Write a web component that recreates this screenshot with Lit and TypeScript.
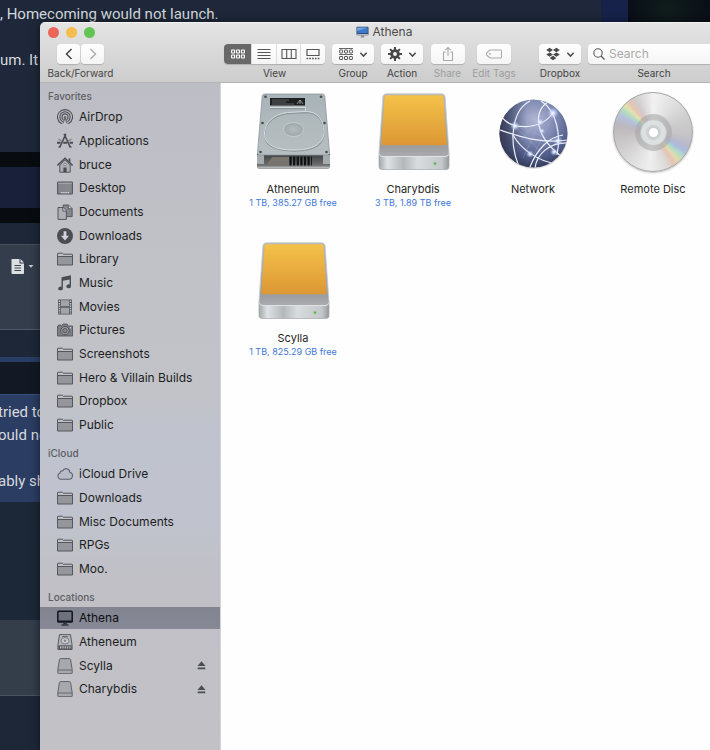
import { LitElement, html, svg, css, nothing, type TemplateResult } from "lit";
import { customElement, property } from "lit/decorators.js";
import { classMap } from "lit/directives/class-map.js";

/* ---------- sidebar glyphs (16 x 16) ---------- */

const folder = svg`
  <path d="M.5 14V2.200h5l1 1h9V14z" fill="#94969c"/>
  <path d="M.5 5V2.200h5l1 1h9V5z" fill="#bdbfc4"/>
  <path d="M.5 14V2.700c0-.3.200-.5.500-.5h4.300c.5 0 .6 1 1.100 1H15c.3 0 .5.2.5.5V14zM.5 5.500h15" fill="none" stroke="#55575d"/>`;

const externalDisk = svg`
  <path d="M3.400 .6h9.200c.5 0 .8.3.9.8l1.700 10.100v3.400c0 .5-.3.800-.8.800H1.600c-.5 0-.8-.3-.8-.8v-3.400L2.500 1.400c.1-.5.4-.8.9-.8z" fill="#a6a8ad" stroke="#606268"/>
  <path d="M1 12h14" stroke="#606268" stroke-width=".9"/>`;

const glyphs: Record<string, unknown> = {
  folder,
  external: externalDisk,
  airdrop: svg`
    <g fill="none" stroke="#4b4d52" stroke-width="1.100" stroke-linecap="round">
      <path d="M4.300 14.600a7.500 7.500 0 1 1 7.400 0"/>
      <path d="M5.200 12.400a5.200 5.200 0 1 1 5.600 0"/>
      <path d="M6 10.300a3.100 3.100 0 1 1 4 0"/>
    </g>
    <path d="M8 7a1.300 1.300 0 0 1 1 2.200l1.600 5.300H5.400L7 9.200A1.300 1.300 0 0 1 8 7z" fill="#65676c"/>
    <path d="M8 10.500l1.800 4.500H6.200z" fill="#c0c1c6"/>`,
  apps: svg`
    <path d="M8.900.9L2.600 14.600M7.100.9l6.300 13.700" stroke="#4b4d52" stroke-width="1.500" fill="none"/>
    <path d="M0 9.700h3.600M6.200 9.700h3.900M12.500 9.700H16" stroke="#4b4d52" stroke-width="2"/>
    <path d="M1.300 6.300l3.200 1.400M14.600 6.300l-4 1.800" stroke="#6b6d72" stroke-width="1"/>
    <path d="M2 12.500l-.7 2.500 2-1.600M14 12.500l.7 2.500-2-1.600" fill="#4b4d52"/>`,
  home: svg`
    <path d="M2.800 8v7.200h10.400V8L8 2.800z" fill="#aeb0b5" stroke="#55575d"/>
    <path d="M.4 8.400L8 1.200l7.600 7.200" fill="none" stroke="#4b4d52" stroke-width="1.400"/>
    <path d="M11.600 1.600h1.800v3.800l-1.800-1.700z" fill="#4b4d52"/>
    <path d="M6.400 10.500h3.200v4.700H6.400z" fill="#4b4d52"/>
    <circle cx="8" cy="7.500" r="1.300" fill="#c8c9cd" stroke="#6b6d72" stroke-width=".6"/>`,
  desktop: svg`
    <rect x=".6" y="2" width="14.800" height="12" rx=".6" fill="#85878d" stroke="#55575d" stroke-width="1.100"/>
    <path d="M1.200 3.300h13.600" stroke="#a9abb0" stroke-width="1"/>
    <path d="M4 12.600h8" stroke="#d5d6da" stroke-width="1.300" stroke-dasharray="1.500 .7"/>`,
  documents: svg`
    <path d="M6.200 1h5.300l3.600 3.600v8H6.200z" fill="#85878d" stroke="#55575d"/>
    <path d="M11.300 1v3.800h3.800" fill="#c0c1c6" stroke="#55575d" stroke-width=".9"/>
    <path d="M1 3.500h5l3.400 3.400v8.500H1z" fill="#aeb0b5" stroke="#55575d"/>
    <path d="M5.800 3.500v3.600h3.600" fill="#c0c1c6" stroke="#55575d" stroke-width=".9"/>`,
  download: svg`
    <circle cx="8" cy="8" r="8" fill="#4b4d52"/>
    <path d="M6.600 3.200h2.800v4.600H12l-4 4.700-4-4.700h2.600z" fill="#d3d4d8"/>`,
  music: svg`
    <path d="M4.500 2.200L14 .3v10.900a2.300 1.900 0 1 1-1.400-1.700V4.400L5.900 5.700v7.700a2.300 1.900 0 1 1-1.400-1.700z" fill="#4b4d52"/>`,
  movies: svg`
    <rect x="1" y=".5" width="14" height="15" fill="#55575d"/>
    <path d="M4 1.300h8v6H4zM4 8.700h8v6H4z" fill="#a2a4aa"/>
    <path d="M2.500 1.500v13M13.500 1.500v13" stroke="#c0c1c6" stroke-width="1.500" stroke-dasharray="1.500 .9"/>`,
  camera: svg`
    <path d="M.5 4h1V3h2.200v1h1.200l1-2h4.200l1 2h4.400v10H.5z" fill="#7d7f85" stroke="#55575d" stroke-width=".9"/>
    <circle cx="8" cy="8.700" r="4.200" fill="#9b9da3" stroke="#505257"/>
    <circle cx="8" cy="8.700" r="2.200" fill="#85878d" stroke="#505257" stroke-width=".9"/>
    <circle cx="13.500" cy="5.800" r=".7" fill="#d0d1d5"/>`,
  cloud: svg`
    <path d="M4 13.200a3.200 3.200 0 0 1-1-6.200c0-1.500 1.400-2.500 2.700-2.100a3.700 3.700 0 0 1 7.100 1.400 3.500 3.500 0 0 1-.4 6.900z" fill="#b9bcc6" stroke="#606268" stroke-width="1.100"/>`,
  computer: svg`
    <rect x=".8" y="1.200" width="14.400" height="10.800" rx=".8" fill="#6d7280" stroke="#14161c" stroke-width="1.500"/>
    <path d="M.5 11.200h15" stroke="#14161c" stroke-width="1.400"/>
    <path d="M6.400 12.500h3.200l.3 1.700H6.100z" fill="#30333c"/>
    <path d="M4.500 15h7" stroke="#14161c" stroke-width="1.100"/>`,
  internal: svg`
    <path d="M2.500.6h11l1.600 10.700v4.200H.9v-4.200z" fill="#b3b5ba" stroke="#5b5d63"/>
    <path d="M1.300 11.300h13.400v3.900H1.300z" fill="#55575d"/>
    <path d="M3 13.400h10.500" stroke="#b3b5ba" stroke-width="2.400" stroke-dasharray="1.400 .9"/>
    <ellipse cx="8" cy="6.800" rx="4" ry="3.200" fill="#c8c9cd" stroke="#6b6d72" stroke-width=".8"/>
    <circle cx="8" cy="6.800" r="1.200" fill="#85878d"/>
    <path d="M5 2.500h6" stroke="#6b6d72"/>`,
};

/* ---------- large volume pictures (80 x 80) ---------- */

const hardDisk = html`<svg class="art" viewBox="0 0 80 80" aria-hidden="true">
  <defs>
    <linearGradient id="hd-top" x1="0" y1="0" x2="0" y2="1"><stop offset="0" stop-color="#a9b4b8"/><stop offset="1" stop-color="#b7bec1"/></linearGradient>
    <linearGradient id="hd-base" x1="0" y1="0" x2="0" y2="1"><stop offset="0" stop-color="#3d3f40"/><stop offset=".7" stop-color="#6a6b6b"/><stop offset="1" stop-color="#a3a6a8"/></linearGradient>
    <radialGradient id="hd-hub"><stop offset="0" stop-color="#b4bcbf"/><stop offset="1" stop-color="#9ea7aa"/></radialGradient>
  </defs>
  <path d="M4 62h73v12.500c0 1.500-1 2.500-2.500 2.500h-68C5 77 4 76 4 74.500z" fill="url(#hd-base)"/>
  <path d="M4 63h7v9H4zM70 63h7v9h-7z" fill="#a5abae"/>
  <path d="M19 65h17v9H13z" fill="#77736d"/>
  <path d="M36.500 69h22.500" stroke="#101112" stroke-width="9" stroke-dasharray="2.200 1.400"/>
  <path d="M4.500 75.500h72" stroke="#b3b7b9" stroke-width="1.500"/>
  <path d="M12 2h57c1.600 0 2.600.8 2.800 2.400L76.500 61c0 1.300-.6 2-2 2h-68c-1.400 0-2-.7-2-2L9.200 4.400C9.400 2.800 10.400 2 12 2z" fill="url(#hd-top)" stroke="#8c9699" stroke-width=".8"/>
  <path d="M17 15.500h35.500v4c13 0 18 9 18.500 20 0 13-12 18.500-30 18.500S11 53 11.500 41c.5-10 8-18.500 23-20.500l18-1" fill="none" stroke="#8d979a" stroke-width="1.300" transform="translate(0 1)"/>
  <path d="M17 15.500h35.500v4c13 0 18 9 18.500 20 0 13-12 18.500-30 18.500S11 53 11.500 41c.5-10 8-18.500 23-20.500l18-1" fill="none" stroke="#d6dddf"/>
  <ellipse cx="40.500" cy="37.500" rx="10" ry="7" fill="url(#hd-hub)" stroke="#cbd2d4" stroke-width=".8"/>
  <path d="M17 6h35v7.500H17z" fill="#1e2021"/>
  <path d="M19 8h17M19 10h14M19 12h22" stroke="#6d7072" stroke-width=".8"/>
  <path d="M44 12l3-4 3 4M47 8v4" fill="none" stroke="#b3b6b8" stroke-width=".8"/>
  <g fill="#454c4f"><circle cx="12.500" cy="4.700" r="1.300"/><circle cx="68" cy="4.700" r="1.300"/><circle cx="9.500" cy="31" r="1.300"/><circle cx="71.500" cy="31" r="1.300"/><circle cx="7.500" cy="60" r="1.300"/><circle cx="73.500" cy="60" r="1.300"/></g>
</svg>`;

const yellowDisk = html`<svg class="art" viewBox="0 0 80 80" aria-hidden="true">
  <defs>
    <linearGradient id="yd-label" x1="0" y1="0" x2="0" y2="1"><stop offset="0" stop-color="#f4c249"/><stop offset="1" stop-color="#dc9734"/></linearGradient>
    <linearGradient id="yd-lid" x1="0" y1="0" x2="0" y2="1"><stop offset="0" stop-color="#b4b6b8"/><stop offset=".85" stop-color="#9c9ea1"/><stop offset="1" stop-color="#aaacae"/></linearGradient>
    <linearGradient id="yd-front" x1="0" y1="0" x2="1" y2="0"><stop offset="0" stop-color="#a3a7aa"/><stop offset=".12" stop-color="#dfe2e4"/><stop offset=".35" stop-color="#b4b8bb"/><stop offset=".55" stop-color="#d9dcde"/><stop offset=".9" stop-color="#c4c7c9"/><stop offset="1" stop-color="#94989b"/></linearGradient>
  </defs>
  <path d="M6 61h70v13.500c0 2-1 3-3 3H9c-2 0-3-1-3-3z" fill="url(#yd-front)" stroke="#a3a6a9" stroke-width=".7"/>
  <path d="M13.500 1.800h55c2 0 3.300 1 3.600 3L76 60c0 3-1 4.500-4 4.500H10c-3 0-4-1.500-4-4.500L9.900 4.800c.3-2 1.600-3 3.600-3z" fill="url(#yd-lid)" stroke="#c9cbcc" stroke-width=".8"/>
  <path d="M6.500 62.500c.7 1.500 2 2 3.500 2h62c1.500 0 2.800-.5 3.500-2" fill="none" stroke="#dfe1e2"/>
  <path d="M13.500 3.200h55c1.200 0 1.800.6 1.900 1.700L73.700 51c0 1.500-.7 2.200-2 2.200H10.300c-1.300 0-2-.7-2-2.200l3.300-46.100c.1-1.100.7-1.700 1.900-1.700z" fill="url(#yd-label)"/>
  <circle cx="62" cy="71.500" r="1.900" fill="#a6c9a0"/><circle cx="62" cy="71.500" r="1" fill="#46b23e"/>
</svg>`;

const globe = html`<svg class="art" viewBox="0 0 80 80" aria-hidden="true">
  <defs>
    <radialGradient id="gl-ball" cx=".52" cy=".3" r=".72"><stop offset="0" stop-color="#b0b5d2"/><stop offset=".45" stop-color="#7b86b0"/><stop offset=".8" stop-color="#4a5683"/><stop offset="1" stop-color="#303852"/></radialGradient>
    <linearGradient id="gl-shade" x1="0" y1="0" x2="1" y2="0"><stop offset="0" stop-color="#2d3044" stop-opacity=".75"/><stop offset=".4" stop-color="#2d3044" stop-opacity="0"/></linearGradient>
    <radialGradient id="gl-spark"><stop offset="0" stop-color="#fff"/><stop offset=".3" stop-color="#dfe8ff" stop-opacity=".8"/><stop offset="1" stop-color="#a9bdff" stop-opacity="0"/></radialGradient>
    <clipPath id="gl-clip"><circle cx="40.500" cy="41.500" r="34"/></clipPath>
  </defs>
  <circle cx="40.500" cy="42.500" r="34.500" fill="#000" opacity=".12"/>
  <circle cx="40.500" cy="41.500" r="34" fill="url(#gl-ball)"/>
  <circle cx="40.500" cy="41.500" r="34" fill="url(#gl-shade)"/>
  <g clip-path="url(#gl-clip)" fill="none">
    <g stroke="#aab4d8" stroke-width=".6" opacity=".55"><path d="M22 34L48 60M47 30L30 66M50 24L28 48M61 22L40 64M65 50L22 34"/></g>
    <g stroke="#eef1fb" stroke-width="1.200">
      <path d="M9 25c8 13 38 14 51-4"/>
      <path d="M7 38c18 6 40 14 68 10"/>
      <path d="M37 9C21 17 14 45 26 75"/>
      <path d="M55 10c-14 8-16 34 17 57"/>
      <path d="M48 9c16 10 20 34 16 54"/>
      <path d="M20 43c8 14 24 26 44 29"/>
      <path d="M42 76c2-14 14-26 34-25"/>
      <path d="M70 43c-14 2-26 14-33 32"/>
    </g>
  </g>
  <g fill="url(#gl-spark)"><circle cx="22" cy="34" r="5"/><circle cx="60" cy="21" r="6"/><circle cx="47" cy="30" r="4"/><circle cx="65" cy="49" r="5"/><circle cx="37" cy="62" r="4"/><circle cx="49" cy="39" r="3"/><circle cx="61" cy="60" r="4"/></g>
</svg>`;

const disc = html`<span class="art disc" aria-hidden="true"><span class="disc-ring"><span class="disc-hub"><span class="disc-hole"></span></span></span></span>`;

/* ---------- toolbar glyphs ---------- */

const chevron = html`<svg class="chevron" viewBox="0 0 8 8" aria-hidden="true"><path d="M1.200 2.500L4 5.400l2.800-2.900" fill="none" stroke="#4a4a4a" stroke-width="1.300"/></svg>`;

const tiles = (y: number) => [0, 1, 2].map(
  (i) => svg`<rect x=${1.6 + i * 4.9} y=${y} width="3" height="3" rx=".5"/>`,
);

const toolGlyph = (body: unknown) => html`<svg class="glyph" viewBox="0 0 16 16" aria-hidden="true">${body}</svg>`;

const iconView = toolGlyph(svg`<g fill="none" stroke="#fff" stroke-width="1.100">${tiles(4)}${tiles(9)}</g>`);
const listView = toolGlyph(svg`<path d="M1.500 3.500h13M1.500 6.500h13M1.500 9.500h13M1.500 12.500h13" stroke="#555"/>`);
const columnView = toolGlyph(svg`<path d="M1 3.500h14v9H1zM5.700 3.500v9M10.300 3.500v9" fill="none" stroke="#555" stroke-width="1.100"/>`);
const galleryView = toolGlyph(svg`<path d="M2 3.500h12v6H2z" fill="none" stroke="#555" stroke-width="1.200"/><path d="M1.500 12.500h13" stroke="#555" stroke-width="1.600" stroke-dasharray="1.700 1.100"/>`);
const groupGlyph = toolGlyph(svg`<path d="M1 2.500h14M1 8.500h14" stroke="#555" stroke-width=".9"/><g fill="none" stroke="#555">${tiles(4)}${tiles(10.5)}</g>`);
const gearGlyph = toolGlyph(svg`
  <g stroke="#484848" stroke-width="2"><path d="M8 1v14M1 8h14M3.100 3.100l9.800 9.800M12.900 3.100l-9.800 9.800"/></g>
  <circle cx="8" cy="8" r="4.800" fill="#484848"/><circle cx="8" cy="8" r="1.900" fill="#f8f8f8"/>`);
const shareGlyph = toolGlyph(svg`<path d="M5.500 6H3.500v8.500h9V6h-2M8 10V1.500M5.300 4.200L8 1.500l2.700 2.700" fill="none" stroke="#aaa" stroke-width="1.100"/>`);
const tagGlyph = toolGlyph(svg`<path d="M4.200 4h10c.8 0 1.300.4 1.300 1.200v5.600c0 .8-.5 1.200-1.300 1.200h-10L1.100 9.500c-.8-.8-.8-2.200 0-3z" fill="none" stroke="#aaa" stroke-width="1.100"/><circle cx="4" cy="8" r=".9" fill="#aaa"/>`);
const dropboxGlyph = toolGlyph(svg`<path d="M4.600 1.800L8 4 4.600 6.200 1.200 4zM11.400 1.800L14.800 4l-3.400 2.200L8 4zM4.600 6.400L8 8.600l-3.400 2.200-3.400-2.200zM11.400 6.400l3.400 2.200-3.400 2.200L8 8.600zM8 9.800l3.400 2.200L8 14.200 4.600 12z" fill="#4a4a4a"/>`);

interface Place { name: string; glyph: string; selected?: boolean; ejectable?: boolean }
interface Volume { name: string; detail?: string; art: TemplateResult }

const sections: { title: string; places: Place[] }[] = [
  {
    title: "Favorites",
    places: [
      { name: "AirDrop", glyph: "airdrop" },
      { name: "Applications", glyph: "apps" },
      { name: "bruce", glyph: "home" },
      { name: "Desktop", glyph: "desktop" },
      { name: "Documents", glyph: "documents" },
      { name: "Downloads", glyph: "download" },
      { name: "Library", glyph: "folder" },
      { name: "Music", glyph: "music" },
      { name: "Movies", glyph: "movies" },
      { name: "Pictures", glyph: "camera" },
      { name: "Screenshots", glyph: "folder" },
      { name: "Hero & Villain Builds", glyph: "folder" },
      { name: "Dropbox", glyph: "folder" },
      { name: "Public", glyph: "folder" },
    ],
  },
  {
    title: "iCloud",
    places: [
      { name: "iCloud Drive", glyph: "cloud" },
      { name: "Downloads", glyph: "folder" },
      { name: "Misc Documents", glyph: "folder" },
      { name: "RPGs", glyph: "folder" },
      { name: "Moo.", glyph: "folder" },
    ],
  },
  {
    title: "Locations",
    places: [
      { name: "Athena", glyph: "computer", selected: true },
      { name: "Atheneum", glyph: "internal" },
      { name: "Scylla", glyph: "external", ejectable: true },
      { name: "Charybdis", glyph: "external", ejectable: true },
    ],
  },
];

const volumes: Volume[] = [
  { name: "Atheneum", detail: "1 TB, 385.27 GB free", art: hardDisk },
  { name: "Charybdis", detail: "3 TB, 1.89 TB free", art: yellowDisk },
  { name: "Network", art: globe },
  { name: "Remote Disc", art: disc },
  { name: "Scylla", detail: "1 TB, 825.29 GB free", art: yellowDisk },
];

const reset = css`
  * { box-sizing: border-box; }
  button { font: inherit; color: inherit; border: 0; margin: 0; padding: 0; background: none; }
  ul { list-style: none; margin: 0; padding: 0; }
  h1, h2, p { margin: 0; font-weight: inherit; font-size: inherit; }
  svg { display: block; flex: none; }
`;

@customElement("forum-backdrop")
class ForumBackdrop extends LitElement {
  static styles = [reset, css`
    :host { display: flex; flex-direction: column; background: #1d2738; color: #d6d9de; font: 15px/23px Roboto, sans-serif; white-space: nowrap; overflow: hidden; }
    .post { display: flex; justify-content: space-between; height: 152px; background: #1e283a; }
    .post-text { padding-top: 3px; }
    .edge { display: flex; width: 109px; background: #17224a; }
    .scene { margin-left: auto; width: 82px; background: radial-gradient(circle at 50% 6%, #101d1b, transparent 30%), #090d17; }
    .gutter { height: 15px; background: #080c11; }
    .navy { height: 41px; background: #18203a; }
    .plain { height: 21px; }
    .editor { display: flex; gap: 3px; height: 86px; padding: 14px 11px; background: #333d4b; border-top: 1px solid #454e5a; border-bottom: 1px solid #4d5968; }
    .page { width: 14px; height: 15px; }
    .caret { width: 6px; height: 15px; }
    .space { height: 27px; }
    .line { height: 5px; background: #283c64; }
    .dark { height: 33px; background: #121924; border-bottom: 1px solid #35507f; }
    .quote { padding: 6px 0 9px; background: #2b3d62; text-indent: -2px; }
    .gap { height: 118px; background: #1c2737; }
    .footer { height: 76px; background: #343d4a; border-bottom: 1px solid #4a5360; }
  `];

  render() {
    return html`
      <div class="post">
        <div class="post-text"><p>, Homecoming would not launch.</p><br><p>um. It</p></div>
        <div class="edge"><div class="scene"></div></div>
      </div>
      <div class="gutter"></div>
      <div class="navy"></div>
      <div class="gutter"></div>
      <div class="plain"></div>
      <div class="editor">
        <svg class="page" viewBox="0 0 14 15" aria-hidden="true"><path d="M1.500 0h7v4.500H13V14c0 .6-.4 1-1 1H1.500C.9 15 .5 14.600.5 14V1c0-.6.4-1 1-1z" fill="#dcdfe2"/><path d="M9.500 0L13 3.500H9.500z" fill="#dcdfe2"/><path d="M3.500 6.500h6.500M3.500 9h6.500M3.500 11.500h6.500" stroke="#3a4450"/></svg>
        <svg class="caret" viewBox="0 0 6 15" aria-hidden="true"><path d="M.5 6h5L3 8.800z" fill="#c7cbd0"/></svg>
      </div>
      <div class="space"></div>
      <div class="line"></div>
      <div class="dark"></div>
      <div class="quote"><p>tried to</p><p>ould no</p><br><p>ably sh</p></div>
      <div class="gap"></div>
      <div class="footer"></div>
    `;
  }
}

@customElement("finder-sidebar")
class FinderSidebar extends LitElement {
  static styles = [reset, css`
    :host { display: block; padding-top: 5px; border-right: 1px solid #d2d3d7; background: linear-gradient(#bdbec5 0%, #c1c2c8 30%, #c2c3c8 46%, #bfc3ce 54%, #c0c3cd 66%, #c0c0c6 74%, #c1c1c6 100%); color: #1d1e22; font: 12px/22px Inter, sans-serif; }
    h2 { padding-left: 8px; font-size: 10px; line-height: 17px; font-weight: 500; color: #5d5e64; }
    ul { margin-bottom: 8px; }
    li { display: flex; align-items: center; height: 24px; }
    li:nth-child(3n) { height: 23px; }
    .selected { background: linear-gradient(#828590, #868995) center / 100% 22px no-repeat; color: #0c0d10; }
    a { flex: 1; display: flex; align-items: center; gap: 6px; padding-left: 17px; color: inherit; text-decoration: none; white-space: nowrap; }
    .icon { width: 16px; height: 16px; }
    .eject { margin-right: 14px; }
    .eject-icon { width: 9px; height: 9px; }
  `];

  render() {
    return html`<nav aria-label="Places">${sections.map((s) => html`
      <section>
        <h2>${s.title}</h2>
        <ul>${s.places.map((p) => html`
          <li class=${classMap({ selected: !!p.selected })}>
            <a href="#" aria-current=${p.selected ? "page" : nothing}>
              <svg class="icon" viewBox="0 0 16 16" aria-hidden="true">${glyphs[p.glyph]}</svg>${p.name}
            </a>
            ${p.ejectable ? html`<button class="eject" aria-label=${`Eject ${p.name}`}>
              <svg class="eject-icon" viewBox="0 0 9 9" aria-hidden="true"><path d="M4.500.3L8.500 5h-8zM.7 6.500h7.600v1.800H.7z" fill="#4b4d52"/></svg>
            </button>` : nothing}
          </li>`)}</ul>
      </section>`)}</nav>`;
  }
}

@customElement("finder-toolbar")
class FinderToolbar extends LitElement {
  @property() heading = "";

  static styles = [reset, css`
    :host { display: block; border-top: 1px solid #f2f2f2; border-bottom: 1px solid #b4b4b6; background: linear-gradient(#e4e4e4, #cdcdcd); color: #444; font: 10px/14px Inter, sans-serif; }
    .titlebar { display: grid; grid-template-columns: 1fr auto 1fr; align-items: center; height: 18px; padding-left: 8px; }
    .lights { display: flex; gap: 7px; }
    .light { width: 11px; height: 11px; border-radius: 50%; }
    .close { background: #ec6559; }
    .minimize { background: #f4bd4f; }
    .zoom { background: #61c454; }
    .title { display: flex; align-items: center; gap: 4px; font-size: 12px; color: #4b4b4b; }
    .mac { width: 13px; height: 12px; }
    .tools { display: flex; gap: 7px; padding: 3px 0 2px 8px; white-space: nowrap; }
    .tool { flex: none; display: flex; flex-direction: column; align-items: center; gap: 2px; }
    .nav { width: 65px; }
    .view { width: 101px; margin-left: 104px; }
    .menu { width: 42px; }
    .share { width: 35px; }
    .tags { width: 44px; }
    .dropbox { margin-left: 16px; }
    .search { flex: 1; min-width: 0; }
    .row { display: flex; gap: 1px; }
    .button, .segments, .field { height: 20px; border-radius: 4px; background: linear-gradient(#fefefe, #f5f5f5); box-shadow: 0 1px 1px #0000002e; }
    .button { display: flex; align-items: center; justify-content: center; gap: 5px; }
    .step { width: 23px; }
    .single { width: 34px; }
    .wide { width: 42px; }
    .segments { display: flex; width: 100%; overflow: hidden; }
    .segment { flex: 1; display: flex; align-items: center; justify-content: center; border-left: 1px solid #dcdcdc; }
    .segment[aria-pressed="true"] { flex: none; width: 27px; border-left: 0; background: #686868; }
    .off { color: #9d9d9d; }
    .glyph { width: 16px; height: 16px; }
    .chevron { width: 9px; height: 9px; }
    .arrow { width: 10px; height: 14px; }
    .field { display: flex; align-items: center; gap: 4px; width: 100%; padding-left: 5px; }
    .lens { width: 12px; height: 12px; }
    input { flex: 1; min-width: 0; border: 0; padding: 0; outline: 0; background: none; font: 12px/20px Inter, sans-serif; color: #333; }
    input::placeholder { color: #a9a9a9; opacity: 1; }
  `];

  private menu(id: string, label: string, glyph: TemplateResult, extra = "") {
    return html`<div class="tool menu ${extra}">
      <button class="button wide" aria-haspopup="menu" aria-labelledby=${id}>${glyph}${chevron}</button>
      <span id=${id}>${label}</span>
    </div>`;
  }

  render() {
    return html`
      <div class="titlebar">
        <div class="lights">
          <button class="light close" aria-label="Close"></button>
          <button class="light minimize" aria-label="Minimize"></button>
          <button class="light zoom" aria-label="Zoom"></button>
        </div>
        <h1 class="title">
          <svg class="mac" viewBox="0 0 13 12" aria-hidden="true"><rect x=".5" y=".8" width="12" height="8.400" rx=".6" fill="#2a3f66"/><path d="M1.200 1.500h10.600v5.800H1.200z" fill="#3f78c4"/><path d="M1.200 1.500h10.600L1.200 5z" fill="#6fa4e0"/><path d="M.5 8h12v1.200H.5z" fill="#b5b8bd"/><path d="M5.300 9.200h2.400l.8 2.300h-4z" fill="#8d9095"/></svg>
          ${this.heading}
        </h1>
      </div>
      <div class="tools">
        <div class="tool nav">
          <div class="row">
            <button class="button step" aria-label="Back"><svg class="arrow" viewBox="0 0 10 14" aria-hidden="true"><path d="M7.500 2L2.500 7l5 5" fill="none" stroke="#444" stroke-width="1.500"/></svg></button>
            <button class="button step" aria-label="Forward"><svg class="arrow" viewBox="0 0 10 14" aria-hidden="true"><path d="M2.500 2l5 5-5 5" fill="none" stroke="#a8a8a8" stroke-width="1.300"/></svg></button>
          </div>
          <span>Back/Forward</span>
        </div>
        <div class="tool view">
          <div class="segments" role="group" aria-labelledby="view">
            <button class="segment" aria-label="Icons" aria-pressed="true">${iconView}</button>
            <button class="segment" aria-label="List" aria-pressed="false">${listView}</button>
            <button class="segment" aria-label="Columns" aria-pressed="false">${columnView}</button>
            <button class="segment" aria-label="Gallery" aria-pressed="false">${galleryView}</button>
          </div>
          <span id="view">View</span>
        </div>
        ${this.menu("group", "Group", groupGlyph)}
        ${this.menu("action", "Action", gearGlyph)}
        <div class="tool share off"><button class="button single" disabled aria-labelledby="share">${shareGlyph}</button><span id="share">Share</span></div>
        <div class="tool tags off"><button class="button single" disabled aria-labelledby="tags">${tagGlyph}</button><span id="tags">Edit Tags</span></div>
        ${this.menu("dropbox", "Dropbox", dropboxGlyph, "dropbox")}
        <div class="tool search">
          <div class="field">
            <svg class="lens" viewBox="0 0 12 12" aria-hidden="true"><circle cx="5" cy="5" r="4.200" fill="none" stroke="#555" stroke-width="1.100"/><path d="M8 8l3.500 3.500" stroke="#555" stroke-width="1.200"/></svg>
            <input id="search" type="text" placeholder="Search">
          </div>
          <label for="search">Search</label>
        </div>
      </div>
    `;
  }
}

@customElement("finder-volumes")
class FinderVolumes extends LitElement {
  static styles = [reset, css`
    :host { display: block; min-width: 0; padding: 9px 0 0 12px; background: #fefefe; color: #262626; font: 11px/14px Inter, sans-serif; }
    ul { display: grid; grid-template-columns: repeat(auto-fill, 120px); row-gap: 32px; }
    li { display: flex; flex-direction: column; align-items: center; min-height: 117px; text-align: center; white-space: nowrap; }
    .art { width: 80px; height: 80px; margin-bottom: 10px; }
    .detail { margin-top: 1px; font-size: 9px; line-height: 12px; color: #3f78d6; }
    .disc { display: grid; place-items: center; border: 1px solid #a5a5a5; border-radius: 50%; background: conic-gradient(#f2f2f2 0deg, #e2e2e2 30deg, #cfcfcf 65deg, #c6c4c6 95deg, #b8b8cc 112deg, #a9bde0 121deg, #b5dcc6 130deg, #e0dcae 138deg, #e6c2b4 146deg, #dcdad8 158deg, #efefef 185deg, #dedede 215deg, #cbc9c9 250deg, #bdb8bc 280deg, #b3c0dc 296deg, #b4dcc0 306deg, #e4e2ae 314deg, #e8c4b4 321deg, #cfcccc 332deg, #f2f2f2 360deg); box-shadow: 0 1px 2px #00000040; }
    .disc-ring { display: grid; place-items: center; width: 37px; height: 37px; border-radius: 50%; background: #a9a9a999; }
    .disc-hub { display: grid; place-items: center; width: 27px; height: 27px; border: 1px solid #c2c6c8; border-radius: 50%; background: #dde0e1; }
    .disc-hole { width: 15px; height: 15px; border: 3px solid #cbd0d2; border-radius: 50%; background: #fff; }
  `];

  render() {
    return html`<ul>${volumes.map((v) => html`
      <li>${v.art}<span>${v.name}</span>${v.detail ? html`<span class="detail">${v.detail}</span>` : nothing}</li>`)}</ul>`;
  }
}

@customElement("app-root")
class AppRoot extends LitElement {
  static styles = [reset, css`
    :host { display: grid; min-height: 100vh; overflow: hidden; }
    forum-backdrop, .window { grid-area: 1 / 1; }
    .window { display: grid; grid-template: auto 1fr / 181px 1fr; z-index: 1; margin: 22px -10px 0 40px; border-top-left-radius: 5px; overflow: hidden; box-shadow: 0 0 10px #00000080; }
    finder-toolbar { grid-column: 1 / -1; }
  `];

  render() {
    return html`
      <forum-backdrop></forum-backdrop>
      <main class="window">
        <finder-toolbar heading="Athena"></finder-toolbar>
        <finder-sidebar></finder-sidebar>
        <finder-volumes></finder-volumes>
      </main>
    `;
  }
}
